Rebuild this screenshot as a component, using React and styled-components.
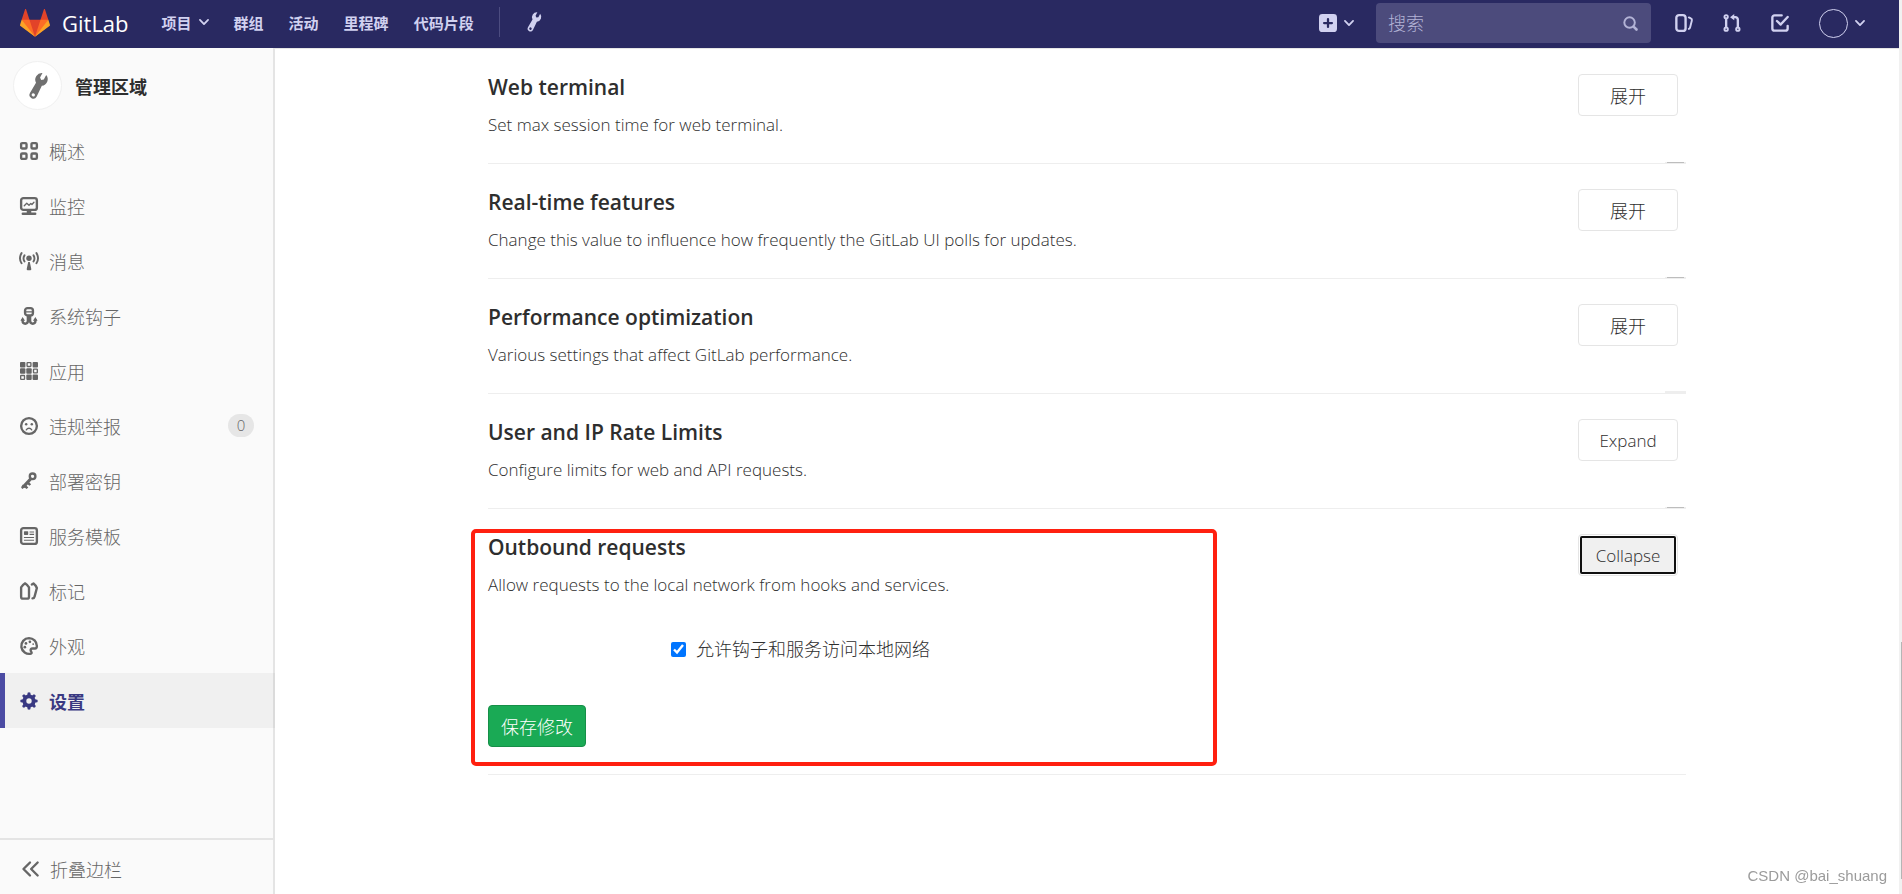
import React from "react";
import styled, { createGlobalStyle } from "styled-components";

const GlobalStyle = createGlobalStyle`
  *, *::before, *::after { box-sizing: border-box; }
  body {
    margin: 0;
    background: #fff;
    color: #2e2e2e;
    font-family: "Open Sans", "Noto Sans CJK SC", sans-serif;
    font-size: 17px;
    font-weight: 300;
  }
  a { color: inherit; text-decoration: none; }
  button, input { font: inherit; }
`;

/* ---------- icons ---------- */

const Glyph = styled.svg.attrs({ viewBox: "0 0 16 16", "aria-hidden": true })`
  width: ${(p) => p.$size || 18}px;
  height: ${(p) => p.$size || 18}px;
  flex: none;
  display: block;
  fill: currentColor;
  overflow: visible;

  .line {
    fill: none;
    stroke: currentColor;
    stroke-width: 2.1;
    stroke-linecap: round;
    stroke-linejoin: round;
  }
  .thin { stroke-width: 1.2; }
  .mid { stroke-width: 1.7; }
  .bold { stroke-width: 2.8; }
`;

const Chevron = () => (
  <Glyph $size={10}>
    <path className="line bold" d="M1.5 4.5 8 11.5l6.5-7" />
  </Glyph>
);

const Wrench = ({ size }) => (
  <Glyph $size={size}>
    <path
      transform="rotate(28 8 8)"
      fillRule="evenodd"
      d="M6.600-1v3.400L8 3.500l1.400-1.100V-1A4.400 4.400 0 0 1 10.200 6.700l.3 8a2.400 2.400 0 0 1-5 0l.3-8A4.400 4.400 0 0 1 6.600-1zM8 13.600a1.100 1.100 0 1 0 0 2.200 1.100 1.100 0 0 0 0-2.200z"
    />
  </Glyph>
);

const Overview = () => (
  <Glyph>
    <rect className="line" x="1" y="1" width="4.800" height="4.800" rx="1" />
    <rect className="line" x="10.200" y="1" width="4.800" height="4.800" rx="1" />
    <rect className="line" x="1" y="10.200" width="4.800" height="4.800" rx="1" />
    <rect className="line" x="10.200" y="10.200" width="4.800" height="4.800" rx="1" />
  </Glyph>
);

const Monitor = () => (
  <Glyph>
    <rect className="line" x="1" y="1" width="14" height="10.500" rx="2" />
    <path className="line thin" d="M3.800 7.800 6 5.600l2 1.800 1.600-1.600 1 .8 1.800-2" />
    <path d="M6 12h4v1.800h3.500a1.100 1.100 0 0 1 0 2.200h-11a1.100 1.100 0 0 1 0-2.200H6z" />
  </Glyph>
);

const Broadcast = () => (
  <Glyph>
    <circle cx="8" cy="5.600" r="2.400" />
    <path d="M7.300 8.800h1.400l1.300 6a1.200 1.200 0 0 1-1 1.500H7a1.200 1.200 0 0 1-1-1.500z" />
    <path className="line mid" d="M4 3a5 5 0 0 0 0 5.400M12 3a5 5 0 0 1 0 5.400M1.400 1a8.400 8.400 0 0 0 0 9M14.600 1a8.400 8.400 0 0 1 0 9" />
  </Glyph>
);

const Hook = () => (
  <Glyph>
    <rect className="line" x="4.500" y="1" width="7" height="6.500" rx="2.200" />
    <path className="line thin" d="M5 4.300h6" />
    <path className="line" d="M7 8v4.500a2.300 2.300 0 0 1-4.700 0v-1M9 8v4.500a2.300 2.300 0 0 0 4.700 0v-1" />
    <path d="M.4 12.200 2.300 8.800l2.200 3.400zM15.600 12.200 13.700 8.800l-2.200 3.400z" />
  </Glyph>
);

const Applications = () => (
  <Glyph>
    <rect x="0" y="0" width="4.800" height="4.800" rx=".8" />
    <rect x="11.200" y="0" width="4.800" height="4.800" rx=".8" />
    <rect x="0" y="5.600" width="4.800" height="4.800" rx=".8" />
    <rect x="5.600" y="5.600" width="4.800" height="4.800" rx=".8" />
    <rect x="5.600" y="11.200" width="4.800" height="4.800" rx=".8" />
    <rect x="11.200" y="11.200" width="4.800" height="4.800" rx=".8" />
    <rect className="line thin" x="6.300" y=".6" width="3.400" height="3.400" rx=".4" />
    <rect className="line thin" x="12" y="6.300" width="3.400" height="3.400" rx=".4" />
    <rect className="line thin" x=".6" y="12" width="3.400" height="3.400" rx=".4" />
  </Glyph>
);

const Frown = () => (
  <Glyph>
    <circle className="line" cx="8" cy="8" r="7" />
    <circle cx="5.500" cy="6.500" r="1.100" />
    <circle cx="10.500" cy="6.500" r="1.100" />
    <path className="line thin" d="M5.600 11.400a2.800 2.800 0 0 1 4.800 0" />
  </Glyph>
);

const Key = () => (
  <Glyph>
    <circle className="line" cx="11.200" cy="3.800" r="2.500" />
    <path className="line bold" d="M9.200 6.400 3.400 12.800" />
    <path d="M2.600 11 1.300 12.800a1.200 1.200 0 0 0 .2 1.600l.8.6 2.300-2zM4.800 11.200l2.600 2.600-1.600 1.400-2.500-2.200zM7.300 8.400l2.600 2.400-1.500 1.500-2.500-2z" />
  </Glyph>
);

const Template = () => (
  <Glyph>
    <rect className="line" x="1" y="1" width="14" height="14" rx="2" />
    <rect x="3.500" y="3.700" width="3.800" height="3.400" rx=".6" />
    <path d="M8.500 3.900h4v1h-4zM8.500 6h4v1h-4zM3.500 8.800h9v1h-9zM3.500 11.300h9v1h-9z" />
  </Glyph>
);

const Labels = () => (
  <Glyph>
    <path className="line" d="M1 4.800Q2.800 2 4.500 1.200 6.200 2 8 4.800V13a1.800 1.800 0 0 1-1.800 1.800H2.800A1.800 1.800 0 0 1 1 13z" />
    <path className="line" d="M10.500 2.200l1.500-.9q2 1.500 3 4l-2 7.500a2.300 2.300 0 0 1-1.900 1.800" />
  </Glyph>
);

const Palette = () => (
  <Glyph>
    <path className="line" d="M8 1a7 7 0 1 0 1.800 13.800c1.200-.4.200-1.700-.2-2.400-.6-1.200.2-2.200 1.500-2.200h2.300c1 0 1.600-.8 1.600-2.200A7 7 0 0 0 8 1z" />
    <circle cx="8.800" cy="4.300" r="1.200" />
    <circle cx="5.300" cy="5.700" r="1.200" />
    <circle cx="4.300" cy="9" r="1.200" />
    <circle cx="11.700" cy="6.300" r=".8" />
  </Glyph>
);

const TEETH = [0, 45, 90, 135, 180, 225, 270, 315];
const Gear = () => (
  <Glyph>
    <circle cx="8" cy="8" r="4.100" fill="none" stroke="currentColor" strokeWidth="3.400" />
    {TEETH.map((a) => (
      <path key={a} transform={`rotate(${a} 8 8)`} d="M6.400 3.200 6.800.6Q8-.2 9.200.6l.4 2.600z" />
    ))}
  </Glyph>
);

const DoubleLeft = () => (
  <Glyph>
    <path className="line" d="M8 2.200 2.200 8 8 13.800M14.800 2.200 9 8l5.800 5.800" />
  </Glyph>
);

const PlusSquare = () => (
  <Glyph>
    <path
      fillRule="evenodd"
      d="M3 0h10a3 3 0 0 1 3 3v10a3 3 0 0 1-3 3H3a3 3 0 0 1-3-3V3a3 3 0 0 1 3-3zm4 4v3H4.500a1 1 0 0 0 0 2H7v2.500a1 1 0 0 0 2 0V9h2.500a1 1 0 0 0 0-2H9V4.500a1 1 0 0 0-2 0z"
    />
  </Glyph>
);

const SearchGlyph = () => (
  <Glyph $size={15}>
    <circle className="line" cx="7" cy="7" r="5.600" />
    <path className="line bold" d="M11.800 11.800l2.600 2.600" />
  </Glyph>
);

const Issues = () => (
  <Glyph>
    <rect className="line" x="1.200" y="1" width="8.200" height="14" rx="2.400" />
    <path className="line mid" d="M12.300 3l1.800.9a1.600 1.600 0 0 1 .9 1.900l-1.600 6.200a2 2 0 0 1-1.100 1.300" />
  </Glyph>
);

const MergeRequest = () => (
  <Glyph>
    <circle className="line mid" cx="2.800" cy="2.500" r="1.500" />
    <circle className="line mid" cx="2.800" cy="13.500" r="1.500" />
    <circle className="line mid" cx="13.200" cy="13.500" r="1.500" />
    <path className="line" d="M2.800 4.800v6.400M13.200 11.200V5a2.200 2.200 0 0 0-2.200-2.200H9" />
    <path d="M10 0v5.600L6.300 2.800z" />
  </Glyph>
);

const Todo = () => (
  <Glyph>
    <path className="line" d="M9.500 1.200H3.200a2 2 0 0 0-2 2v9.600a2 2 0 0 0 2 2h9.600a2 2 0 0 0 2-2V10.500" />
    <path className="line" d="M5.300 6.200 8.600 9.400 14.800 2.600" />
  </Glyph>
);

const Tanuki = () => (
  <svg width="30" height="30" viewBox="0 0 36 36" aria-hidden="true">
    <path fill="#e24329" d="M2 14l9.380 9v-9l-4-12.280c-.205-.632-1.176-.632-1.380 0z" />
    <path fill="#e24329" d="M34 14l-9.380 9v-9l4-12.280c.205-.632 1.176-.632 1.380 0z" />
    <path fill="#e24329" d="M18 34.380 3 14h30z" />
    <path fill="#fc6d26" d="M18 34.380 11.380 14H2l4 11z" />
    <path fill="#fc6d26" d="M18 34.380 24.620 14H34l-4 11z" />
    <path fill="#fca326" d="M2 14L.1 20.160c-.18.565 0 1.200.5 1.560L18 34.380z" />
    <path fill="#fca326" d="M34 14l1.900 6.160c.18.565 0 1.200-.5 1.560L18 34.380z" />
  </svg>
);

/* ---------- page frame ---------- */

const Shell = styled.div`
  display: flex;
  min-height: 100vh;
`;

const Page = styled.div`
  flex: 1;
  min-width: 0;
  display: flex;
  flex-direction: column;
`;

const Columns = styled.div`
  flex: 1;
  display: flex;
`;

const ScrollTrack = styled.div`
  width: 3px;
  background: #f1f1f1;
  display: flex;
  flex-direction: column;
  justify-content: flex-end;
  align-items: flex-end;
  padding-bottom: 15px;
`;

const ScrollThumb = styled.div`
  width: 1px;
  height: 237px;
  background: #b5b5b5;
`;

/* ---------- top bar ---------- */

const TopBar = styled.header`
  height: 48px;
  display: flex;
  align-items: center;
  padding: 0 34px 2px 20px;
  background: #292961;
  color: #d1d1f0;
  box-shadow: 0 1px 0 #e5e5e5;
`;

const Brand = styled.a`
  display: flex;
  align-items: center;
  gap: 12px;
  margin-right: 33px;
  color: #fff;
  font-size: 22px;
  font-weight: 400;
  line-height: 30px;
`;

const TopNav = styled.nav`
  display: flex;
  align-items: center;
  gap: 25px;
  padding-bottom: 2px;
  font-size: 15px;
  font-weight: 700;
`;

const TopLink = styled.a`
  white-space: nowrap;
`;

const BarButton = styled.button`
  display: flex;
  align-items: center;
  gap: 7px;
  padding: 0;
  border: 0;
  background: none;
  color: inherit;
  white-space: nowrap;
`;

const BarRule = styled.span`
  width: 1px;
  height: 30px;
  background: #4c4c80;
`;

const BarTools = styled.div`
  margin-left: auto;
  display: flex;
  align-items: center;
  gap: 24px;
`;

const SearchGroup = styled.div`
  display: flex;
  align-items: center;
  gap: 22px;
`;

const IconGroup = styled.div`
  display: flex;
  align-items: center;
  gap: 30px;
`;

const SearchField = styled.label`
  width: 275px;
  height: 40px;
  display: flex;
  align-items: center;
  padding: 0 13px 0 12px;
  border-radius: 4px;
  background: #4c4b7c;
  color: #b3b3d6;
`;

const SearchInput = styled.input`
  flex: 1;
  min-width: 0;
  padding: 0;
  border: 0;
  outline: 0;
  background: none;
  color: #fff;
  font-size: 18px;
  &::placeholder { color: #b3b3d6; opacity: 1; }
`;

const Avatar = styled.span`
  width: 29px;
  height: 29px;
  border: 1px solid #d1d1f0;
  border-radius: 50%;
`;

/* ---------- side bar ---------- */

const SideBar = styled.aside`
  flex: none;
  width: 275px;
  display: flex;
  flex-direction: column;
  background: #fafafa;
  box-shadow: inset -2px 0 0 #e4e4e4;
  color: #666;
  font-size: 18px;
`;

const SideTitle = styled.a`
  height: 75px;
  display: flex;
  align-items: center;
  gap: 13px;
  padding-left: 13px;
  color: #2e2e2e;
  font-weight: 700;
`;

const TitleDisc = styled.span`
  width: 49px;
  height: 49px;
  display: grid;
  place-items: center;
  border: 1px solid #f0f0f0;
  border-radius: 50%;
  background: #fff;
  color: #707070;
`;

const SideList = styled.ul`
  flex: 1;
  margin: 0;
  padding: 0;
  list-style: none;
`;

const SideLink = styled.a`
  height: 55px;
  display: flex;
  align-items: center;
  gap: 11px;
  padding: 0 21px 0 15px;
  border-left: 5px solid ${(p) => (p.$active ? "#4b4ba3" : "transparent")};
  background: ${(p) => (p.$active ? "rgba(0, 0, 0, 0.04)" : "none")};
  color: ${(p) => (p.$active ? "#393982" : "inherit")};
  font-weight: ${(p) => (p.$active ? 700 : 300)};
`;

const Count = styled.span`
  margin-left: auto;
  width: 26px;
  height: 23px;
  border-radius: 12px;
  background: #e6e6e6;
  font-size: 15px;
  line-height: 23px;
  text-align: center;
`;

const CollapseBar = styled.button`
  height: 56px;
  display: flex;
  align-items: center;
  gap: 11px;
  padding: 4px 21px 0;
  border: 0;
  border-top: 2px solid #e4e4e4;
  background: none;
  color: inherit;
`;

/* ---------- settings ---------- */

const Main = styled.main`
  flex: 1;
  min-width: 0;
  padding: 1px 20px 0;
`;

const Section = styled.section`
  position: relative;
  max-width: 1198px;
  min-height: 115px;
  margin: 0 auto;
  padding-top: 25px;
  border-bottom: 1px solid #eee;
`;

const SectionHead = styled.div`
  display: flex;
  justify-content: space-between;
  align-items: flex-start;
  padding-right: 8px;
`;

const SectionTitle = styled.h4`
  margin: 0 0 10px;
  font-size: 21px;
  font-weight: 600;
  line-height: 27px;
`;

const SectionText = styled.p`
  margin: 0;
  line-height: 28px;
`;

const Button = styled.button`
  width: 100px;
  height: 42px;
  padding: 0;
  border: 1px solid #e5e5e5;
  border-radius: 4px;
  background: #fff;
  color: #2e2e2e;
  font-size: ${(p) => (p.$cjk ? 18 : 17)}px;
`;

const PressedButton = styled(Button)`
  background: #f0f0f0;
  box-shadow: inset 0 0 0 1px #fff;
  outline: 2px solid #101010;
  outline-offset: -4px;
`;

const SaveButton = styled(Button)`
  width: 98px;
  border-color: #168f48;
  background: #1aaa55;
  color: #fff;
`;

const SettingsForm = styled.form`
  display: flex;
  flex-direction: column;
  align-items: flex-start;
  gap: 42px;
  padding: 36px 0 27px;
`;

const CheckRow = styled.label`
  display: flex;
  align-items: center;
  gap: 10px;
  margin-left: 183px;
  font-size: 18px;
  line-height: 28px;
`;

const CheckBox = styled.input`
  width: 15px;
  height: 15px;
  margin: 0;
  accent-color: #0075ff;
`;

const ScrollStub = styled.span`
  position: absolute;
  right: 0;
  bottom: 0;
  width: 21px;
  height: ${(p) => (p.$faint ? 2 : 1)}px;
  border: solid #eee;
  border-width: 0 2px;
  background: ${(p) => (p.$faint ? "#eee" : "#bdbdbd")};
`;

const Highlight = styled.div`
  position: absolute;
  top: 20px;
  bottom: 8px;
  left: -17px;
  width: 746px;
  border: 4px solid #ff2010;
  border-radius: 5px;
  pointer-events: none;
`;

const Watermark = styled.div`
  position: fixed;
  right: 15px;
  bottom: 9px;
  color: #9b9b9b;
  font-family: "Liberation Sans", sans-serif;
  font-size: 15px;
  line-height: 18px;
`;

const SIDE_ITEMS = [
  { label: "概述", icon: Overview },
  { label: "监控", icon: Monitor },
  { label: "消息", icon: Broadcast },
  { label: "系统钩子", icon: Hook },
  { label: "应用", icon: Applications },
  { label: "违规举报", icon: Frown, count: 0 },
  { label: "部署密钥", icon: Key },
  { label: "服务模板", icon: Template },
  { label: "标记", icon: Labels },
  { label: "外观", icon: Palette },
  { label: "设置", icon: Gear, active: true },
];

const SECTIONS = [
  { title: "Web terminal", text: "Set max session time for web terminal.", action: "展开", cjk: true },
  { title: "Real-time features", text: "Change this value to influence how frequently the GitLab UI polls for updates.", action: "展开", cjk: true },
  { title: "Performance optimization", text: "Various settings that affect GitLab performance.", action: "展开", cjk: true, faint: true },
  { title: "User and IP Rate Limits", text: "Configure limits for web and API requests.", action: "Expand" },
];

const Heading = ({ title, text, children }) => (
  <SectionHead>
    <div>
      <SectionTitle>{title}</SectionTitle>
      <SectionText>{text}</SectionText>
    </div>
    {children}
  </SectionHead>
);

export default function App() {
  return (
    <Shell>
      <GlobalStyle />
      <Page>
        <TopBar>
          <Brand href="#">
            <Tanuki />
            GitLab
          </Brand>
          <TopNav>
            <BarButton type="button">项目<Chevron /></BarButton>
            <TopLink href="#">群组</TopLink>
            <TopLink href="#">活动</TopLink>
            <TopLink href="#">里程碑</TopLink>
            <TopLink href="#">代码片段</TopLink>
            <BarRule />
            <TopLink href="#" aria-label="管理区域"><Wrench size={18} /></TopLink>
          </TopNav>
          <BarTools>
            <SearchGroup>
              <BarButton type="button" aria-label="新建"><PlusSquare /><Chevron /></BarButton>
              <SearchField>
                <SearchInput type="text" placeholder="搜索" aria-label="搜索" />
                <SearchGlyph />
              </SearchField>
            </SearchGroup>
            <IconGroup>
              <a href="#" aria-label="议题"><Issues /></a>
              <a href="#" aria-label="合并请求"><MergeRequest /></a>
              <a href="#" aria-label="待办事项"><Todo /></a>
              <BarButton type="button" aria-label="用户"><Avatar /><Chevron /></BarButton>
            </IconGroup>
          </BarTools>
        </TopBar>

        <Columns>
          <SideBar>
            <SideTitle href="#">
              <TitleDisc><Wrench size={24} /></TitleDisc>
              管理区域
            </SideTitle>
            <SideList>
              {SIDE_ITEMS.map(({ label, icon: Icon, count, active }) => (
                <li key={label}>
                  <SideLink href="#" $active={active}>
                    <Icon />
                    {label}
                    {count !== undefined && <Count>{count}</Count>}
                  </SideLink>
                </li>
              ))}
            </SideList>
            <CollapseBar type="button"><DoubleLeft />折叠边栏</CollapseBar>
          </SideBar>

          <Main>
            {SECTIONS.map((s) => (
              <Section key={s.title}>
                <Heading title={s.title} text={s.text}>
                  <Button type="button" $cjk={s.cjk}>{s.action}</Button>
                </Heading>
                <ScrollStub $faint={s.faint} />
              </Section>
            ))}
            <Section>
              <Heading title="Outbound requests" text="Allow requests to the local network from hooks and services.">
                <PressedButton type="button">Collapse</PressedButton>
              </Heading>
              <SettingsForm>
                <CheckRow>
                  <CheckBox type="checkbox" defaultChecked />
                  允许钩子和服务访问本地网络
                </CheckRow>
                <SaveButton type="button" $cjk>保存修改</SaveButton>
              </SettingsForm>
              <Highlight />
            </Section>
          </Main>
        </Columns>
      </Page>
      <ScrollTrack><ScrollThumb /></ScrollTrack>
      <Watermark>CSDN @bai_shuang</Watermark>
    </Shell>
  );
}
